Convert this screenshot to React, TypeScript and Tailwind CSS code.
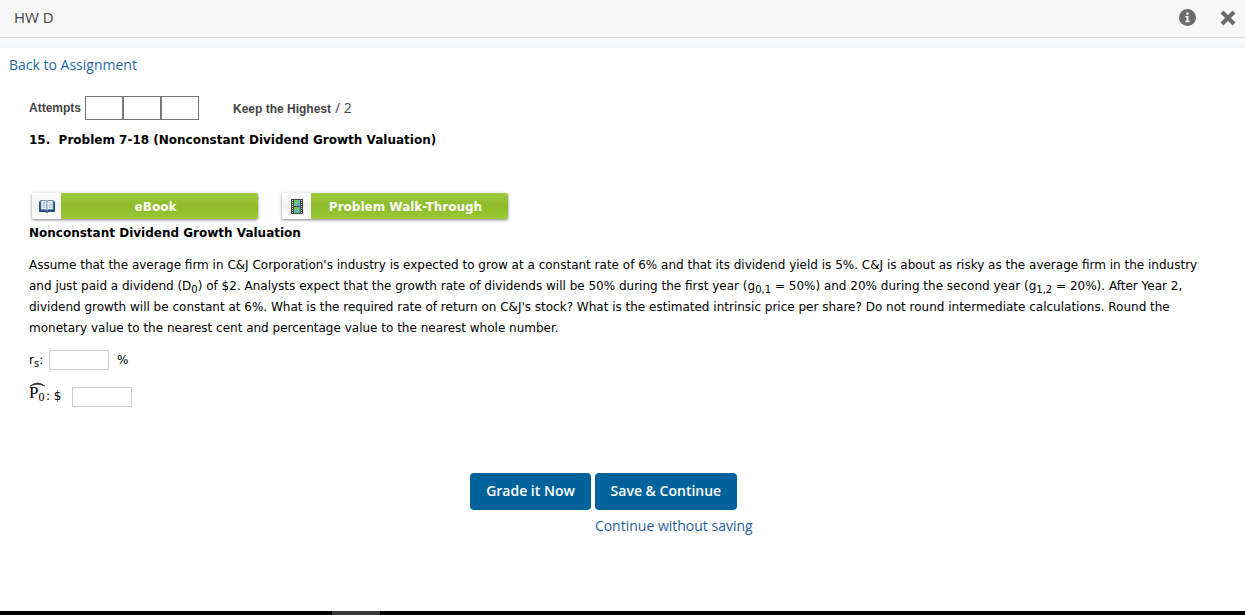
import type { ReactNode } from "react";

function InfoIcon() {
  return (
    <svg width="17" height="17" viewBox="0 0 16 16" aria-hidden="true">
      <circle cx="8" cy="8" r="8" fill="#6b6b6b" />
      <path d="M6.700 3.400h2.300v1.900H6.700zM6 6.500h3v4.500h1v1.500H6V11h1V8H6z" fill="#f7f7f7" />
    </svg>
  );
}

function CloseIcon() {
  return (
    <svg width="16" height="16" viewBox="0 0 16 16" aria-hidden="true">
      <path d="M2 2l12 12M14 2L2 14" stroke="#6b6b6b" strokeWidth="4" />
    </svg>
  );
}

function BookIcon() {
  return (
    <svg width="16" height="14" viewBox="0 0 16 14" aria-hidden="true">
      <path d="M0 2.500h1.500V1h5L8 2l1.500-1h5v1.500H16V13H9.500L8 14l-1.500-1H0z" fill="#24507f" />
      <path d="M2 1.500h4.500L8 2.500v9L6.500 10.500H2z" fill="#f4f7fa" stroke="#5c87b0" strokeWidth=".7" />
      <path d="M14 1.500H9.500L8 2.500v9l1.500-1H14z" fill="#f4f7fa" stroke="#5c87b0" strokeWidth=".7" />
      <path d="M3.500 4h3M3.500 6h3M3.500 8h3M9.500 4h3M9.500 6h3M9.500 8h3" stroke="#9aa7b4" strokeWidth="1" />
    </svg>
  );
}

function FilmIcon() {
  return (
    <svg width="12" height="15" viewBox="0 0 12 15" aria-hidden="true">
      <path d="M0 0h12v15H0z" fill="#454545" />
      <path d="M3 1h6v6H3zM3 8h6v6H3z" fill="#58b5e0" />
      <path d="M3 1h3l3 3v1L6 4H3zM3 7V5l4 2zM3 8h3l3 3v1l-3-1H3zM3 14v-2l4 2z" fill="#70c94d" />
      <path d="M1.500 1v14M10.500 1v14" stroke="#e5e5e5" strokeWidth="1" strokeDasharray="1 1" />
    </svg>
  );
}

function ResourceButton({ icon, children }: { icon: ReactNode; children: ReactNode }) {
  return (
    <button type="button" className="flex h-[26px] w-[226px] overflow-hidden rounded-xs text-xs font-bold text-white shadow-[0_1px_3px_rgba(0,0,0,0.5)]">
      <span className="flex h-full w-[29px] items-center justify-center bg-linear-to-b from-white via-[#f0f0f0] to-white">{icon}</span>
      <span className="flex h-full flex-1 items-center justify-center bg-linear-to-b from-[#a0cd3e] via-[#8cba28] to-[#9aca35] pt-0.5 pr-2">{children}</span>
    </button>
  );
}

function Sub({ children }: { children: ReactNode }) {
  return <sub className="text-[10px] leading-none">{children}</sub>;
}

export default function App() {
  return (
    <div className="flex min-h-screen flex-col bg-white font-['Open_Sans',sans-serif] text-sm text-[#444]">
      <header className="flex h-[38px] items-center justify-between border-b border-[#d5dcdd] bg-[#f7f7f7] pr-[9px] pb-0.5 pl-3.5">
        <h1 className="text-[15px]">HW D</h1>
        <div className="flex items-center gap-6">
          <button type="button" aria-label="Information"><InfoIcon /></button>
          <button type="button" aria-label="Close"><CloseIcon /></button>
        </div>
      </header>
      <div className="h-2.5 bg-linear-to-b from-white to-[#edf3f4]" />
      <a href="#assignment" className="mt-[7px] ml-[9px] self-start leading-5 text-[#1f6ba5]">Back to Assignment</a>
      <main className="flex flex-col pr-7 pl-[29px] font-['DejaVu_Sans',sans-serif] text-xs text-black">
        <div className="mt-[21px] flex items-center font-['Liberation_Sans',sans-serif] font-bold text-[#444]">
          <span className="mr-1">Attempts</span>
          <div className="flex">
            <span className="h-6 w-[38px] border border-[#777]" />
            <span className="h-6 w-[38px] border border-[#777]" />
            <span className="h-6 w-[38px] border border-[#777]" />
          </div>
          <span className="ml-[34px] flex items-baseline gap-1 leading-4">Keep the Highest <span className="font-['Open_Sans',sans-serif] text-sm leading-4 font-normal">/ 2</span></span>
        </div>
        <h2 className="mt-2.5 text-xs leading-5 font-bold">15.&nbsp; Problem 7-18 (Nonconstant Dividend Growth Valuation)</h2>
        <div className="mt-[43px] ml-[3px] flex gap-6">
          <ResourceButton icon={<BookIcon />}>eBook</ResourceButton>
          <ResourceButton icon={<FilmIcon />}>Problem Walk-Through</ResourceButton>
        </div>
        <h3 className="mt-1 text-xs leading-5 font-bold">Nonconstant Dividend Growth Valuation</h3>
        <p className="mt-3 leading-[21px]">
          Assume that the average firm in C&amp;J Corporation's industry is expected to grow at a constant rate of 6% and that its dividend yield is 5%. C&amp;J is about as risky as the average firm in the industry and just paid a dividend (D<Sub>0</Sub>) of $2. Analysts expect that the growth rate of dividends will be 50% during the first year (g<Sub>0,1</Sub> = 50%) and 20% during the second year (g<Sub>1,2</Sub> = 20%). After Year 2, dividend growth will be constant at 6%. What is the required rate of return on C&amp;J's stock? What is the estimated intrinsic price per share? Do not round intermediate calculations. Round the monetary value to the nearest cent and percentage value to the nearest whole number.
        </p>
        <div className="mt-[11px] flex h-5 items-center">
          <label htmlFor="required-return" className="w-5">r<Sub>s</Sub>:</label>
          <input id="required-return" type="text" className="h-5 w-[60px] border border-[#ccc]" />
          <span className="ml-2">%</span>
        </div>
        <div className="mt-3 flex h-[25px] items-end">
          <label htmlFor="intrinsic-price" className="flex h-[25px] w-[43px] items-start">
            <span className="relative w-[17px] font-['Liberation_Serif',serif] text-[17px] leading-[22px]">
              P<sub className="text-xs leading-none">0</sub>
              <svg className="absolute top-0 left-0" width="17" height="5" viewBox="0 0 17 5" aria-hidden="true">
                <path d="M1 4Q5 1 8.500 1T16 4Q12 2.300 8.500 2.300T1 4" fill="#222" stroke="#222" strokeWidth=".6" />
              </svg>
            </span>
            <span className="pt-1.5 leading-4">:&nbsp;$</span>
          </label>
          <input id="intrinsic-price" type="text" className="h-5 w-[60px] border border-[#ccc]" />
        </div>
      </main>
      <div className="mt-[66px] flex justify-center pr-[38px]">
        <div className="grid grid-cols-[auto_auto] gap-x-1 gap-y-1.5">
          <button type="button" className="h-[37px] rounded bg-[#00629b] px-4 pb-0.5 font-semibold text-white">Grade it Now</button>
          <button type="button" className="h-[37px] w-[142px] rounded bg-[#00629b] pb-0.5 font-semibold text-white">Save &amp; Continue</button>
          <a href="#continue" className="col-start-2 w-[142px] leading-5 whitespace-nowrap text-[#1f5f99]">Continue without saving</a>
        </div>
      </div>
      <footer className="mt-auto flex h-1 bg-black">
        <span className="ml-[332px] w-12 bg-[#353535]" />
      </footer>
    </div>
  );
}
